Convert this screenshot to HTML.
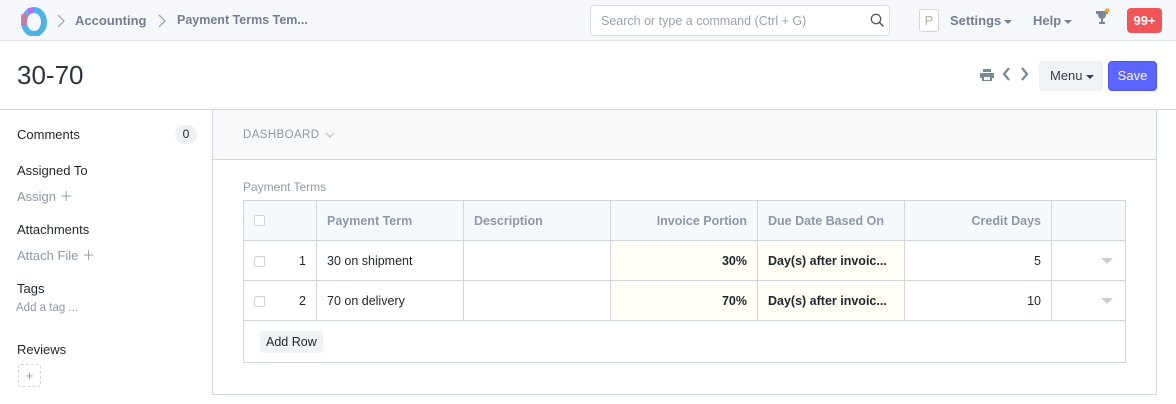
<!DOCTYPE html>
<html><head><style>
*{box-sizing:border-box;margin:0;padding:0}
body{width:1176px;height:404px;overflow:hidden;background:#fff;font-family:"Liberation Sans",sans-serif;color:#1f272e;position:relative;font-size:13px}
.a{position:absolute}
.nav{left:0;top:0;width:1176px;height:41px;background:#f5f7fa;border-bottom:1px solid #e2e6ea}
.g{color:#74808d;font-weight:bold;font-size:13px}
.cb{width:11px;height:11px;border:1px solid #cfd4d9;border-radius:2px;background:#fff}
td,th{border:1px solid #d1d8dd}
table{border-collapse:collapse;position:absolute;left:243px;top:200px;table-layout:fixed}
th{height:40px;background:#f6f9fc;color:#8d99a6;font-size:12.5px;font-weight:bold;text-align:left;padding:0 10px}
td{height:40px;padding:0 10px;font-size:12.5px}
.r{text-align:right}
.y{background:#fffdf4}
.b{font-weight:bold}
.car{display:inline-block;width:0;height:0;border-left:4px solid transparent;border-right:4px solid transparent;border-top:4px solid currentColor;vertical-align:middle;margin-left:3px}
.dd{float:right;width:0;height:0;border-left:6px solid transparent;border-right:6px solid transparent;border-top:6px solid #c8ced4;margin-right:2px}
</style></head><body>
<div class="a nav"></div>
<svg class="a" style="left:18px;top:6px" width="30" height="30" viewBox="0 0 30 30"><ellipse cx="16" cy="16" rx="10" ry="12" fill="none" stroke="#4fb3e6" stroke-width="6"/><rect x="3" y="8" width="6" height="12" fill="#f06a8c" opacity=".7"/><rect x="10" y="2" width="6" height="5" fill="#b56cf0"/></svg>
<svg class="a" style="left:56px;top:14px" width="10" height="14"><path d="M2 1l6 6-6 6" fill="none" stroke="#a0a9b3" stroke-width="1.3"/></svg>
<div class="a g" style="left:75px;top:13px">Accounting</div>
<svg class="a" style="left:157px;top:14px" width="10" height="14"><path d="M2 1l6 6-6 6" fill="none" stroke="#a0a9b3" stroke-width="1.3"/></svg>
<div class="a g" style="left:177px;top:13px;font-size:12.5px">Payment Terms Tem...</div>
<div class="a" style="left:590px;top:5px;width:300px;height:31px;border:1px solid #d9dee3;border-radius:4px;background:#fff;color:#9aa4ae;font-size:12.5px;padding:8px 10px">Search or type a command (Ctrl + G)</div>
<svg class="a" style="left:870px;top:13px" width="15" height="15"><circle cx="6" cy="6" r="4.7" fill="none" stroke="#555" stroke-width="1.3"/><path d="M9.5 9.5l4 4" stroke="#555" stroke-width="1.5"/></svg>
<div class="a" style="left:919px;top:9px;width:20px;height:23px;border:1px solid #d1d8dd;border-radius:3px;color:#a9b2bb;font-size:13px;text-align:center;line-height:21px;background:#fff">P</div>
<div class="a g" style="left:950px;top:13px">Settings<span class="car"></span></div>
<div class="a g" style="left:1033px;top:13px">Help<span class="car"></span></div>
<svg class="a" style="left:1094px;top:8px" width="16" height="18"><path d="M4 3h8v4a4 4 0 0 1-8 0z M2 3h2v3H2z M12 3h2v3h-2z M7 11h2v3H7z M5 14h6v2H5z" fill="#7c8794"/><circle cx="13" cy="2.5" r="2.3" fill="#f5a623"/></svg>
<div class="a" style="left:1127px;top:8px;width:35px;height:25px;background:#f0555a;border-radius:4px;color:#fff;font-weight:bold;font-size:13px;text-align:center;line-height:25px">99+</div>
<div class="a" style="left:17px;top:60px;font-size:26px;color:#2e353d">30-70</div>
<svg class="a" style="left:980px;top:69px" width="14" height="12"><path d="M3 0h8v3H3z M0 4h14v5h-2v3H2V9H0z" fill="#7c8794"/><rect x="4" y="8" width="6" height="3" fill="#fff"/></svg>
<svg class="a" style="left:1003px;top:67px" width="30" height="14"><path d="M6 1L1 7l5 6 M19 1l5 6-5 6" fill="none" stroke="#7c8794" stroke-width="2.2"/></svg>
<div class="a" style="left:1039px;top:61px;width:64px;height:30px;background:#f0f3f6;border-radius:4px;font-size:13px;line-height:30px;padding-left:11px;color:#36414c">Menu<span class="car"></span></div>
<div class="a" style="left:1108px;top:61px;width:49px;height:30px;background:#5e64ff;border:1px solid #4f55e8;border-radius:4px;color:#fff;font-size:13px;line-height:28px;text-align:center">Save</div>
<div class="a" style="left:0;top:109px;width:1176px;border-top:1px solid #d1d8dd"></div>
<div class="a" style="left:17px;top:127px">Comments</div>
<div class="a" style="left:175px;top:125px;width:22px;height:19px;background:#eef1f4;border-radius:10px;text-align:center;line-height:19px;font-size:12px">0</div>
<div class="a" style="left:17px;top:163px">Assigned To</div>
<div class="a" style="left:17px;top:186px;color:#8d99a6">Assign ＋</div>
<div class="a" style="left:17px;top:222px">Attachments</div>
<div class="a" style="left:17px;top:245px;color:#8d99a6">Attach File ＋</div>
<div class="a" style="left:17px;top:281px">Tags</div>
<div class="a" style="left:16px;top:302px;color:#8d99a6;font-size:11.5px">Add a tag ...</div>
<div class="a" style="left:17px;top:342px">Reviews</div>
<div class="a" style="left:18px;top:364px;width:23px;height:23px;border:1px dashed #cfd4d9;border-radius:3px;color:#8d99a6;text-align:center;line-height:21px">+</div>
<div class="a" style="left:212px;top:109px;width:945px;height:286px;border:1px solid #d1d8dd;border-top:none"></div>
<div class="a" style="left:213px;top:110px;width:943px;height:50px;background:#f7f9fb;border-bottom:1px solid #d1d8dd"></div>
<div class="a" style="left:243px;top:129px;color:#8d99a6;font-size:11.5px;letter-spacing:.4px">DASHBOARD</div>
<svg class="a" style="left:325px;top:132px" width="10" height="7"><path d="M1 1l4 4 4-4" fill="none" stroke="#b9c1c9" stroke-width="1.2"/></svg>
<div class="a" style="left:243px;top:180px;color:#8d99a6;font-size:12px">Payment Terms</div>
<table style="width:882px">
<colgroup><col style="width:73px"><col style="width:147px"><col style="width:147px"><col style="width:147px"><col style="width:147px"><col style="width:147px"><col style="width:74px"></colgroup>
<tr><th><div class="cb"></div></th><th>Payment Term</th><th>Description</th><th class="r">Invoice Portion</th><th>Due Date Based On</th><th class="r">Credit Days</th><th></th></tr>
<tr><td><div class="cb" style="float:left;margin-top:2px"></div><span style="float:right">1</span></td><td>30 on shipment</td><td></td><td class="r y b">30%</td><td class="y b">Day(s) after invoic...</td><td class="r">5</td><td><span class="dd"></span></td></tr>
<tr><td><div class="cb" style="float:left;margin-top:2px"></div><span style="float:right">2</span></td><td>70 on delivery</td><td></td><td class="r y b">70%</td><td class="y b">Day(s) after invoic...</td><td class="r">10</td><td><span class="dd"></span></td></tr>
<tr><td colspan="7" style="height:42px;padding-left:16px"><span style="background:#f0f3f6;border-radius:3px;padding:4px 6px;font-size:12.5px">Add Row</span></td></tr>
</table>
</body></html>
